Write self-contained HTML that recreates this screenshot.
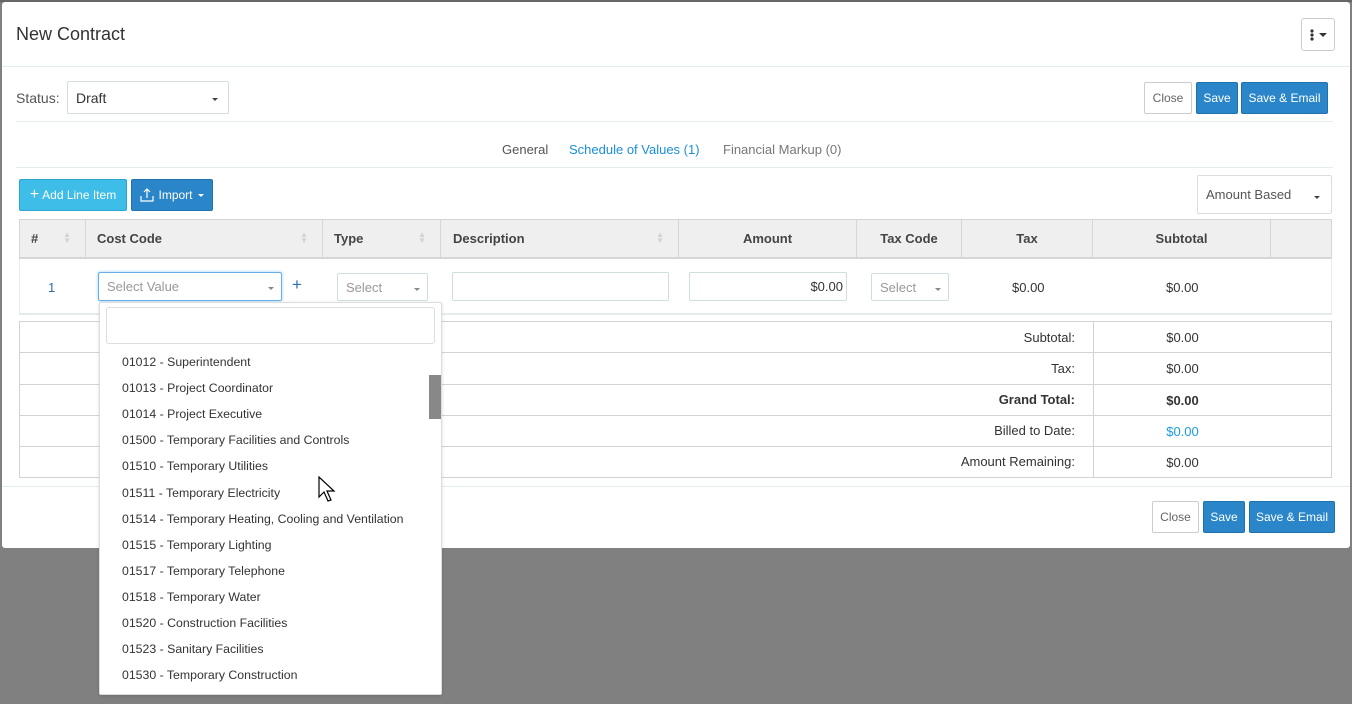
<!DOCTYPE html>
<html><head><meta charset="utf-8"><style>
*{box-sizing:border-box;margin:0;padding:0}
body{width:1352px;height:704px;background:#808080;font-family:"Liberation Sans",sans-serif;font-size:13px;color:#333;position:relative;overflow:hidden}
.a{position:absolute}
.modal{left:2px;top:2px;width:1348px;height:546px;background:#fff;border-radius:3px}
.hl{height:1px;background:#e3eeec}
.btn{position:absolute;display:flex;align-items:center;justify-content:center;font-size:12px;border-radius:2px}
.close{background:#fff;border:1px solid #ccc;color:#666}
.blue{background:#2a86c8;border:1px solid #1f72ad;color:#fff}
.sel{position:absolute;border:1px solid #cfdede;background:#fff;display:flex;align-items:center;padding-left:8px;border-radius:2px}
.caret{position:absolute;width:0;height:0;border-left:3px solid transparent;border-right:3px solid transparent;border-top:3px solid #444}
.th{position:absolute;top:219px;height:39px;display:flex;align-items:center;font-weight:bold;color:#444;border-right:1px solid #d6d6d6}
.sort{position:absolute;right:14px;top:13px;color:#d2d2d2;font-size:8px;line-height:6px}
.sr{position:absolute;left:19px;width:1313px;height:32px;border:1px solid #d3d3d3;border-top:none}
.lbl{position:absolute;right:256px;top:0;line-height:31px;text-align:right}
.val{position:absolute;left:1094px;width:177px;text-align:center;line-height:31px}
.it{position:absolute;left:122px;font-size:12.3px;color:#333}
</style></head><body>
<div class="a" style="left:0;top:0;width:1352px;height:2px;background:#666"></div>
<div class="a modal"></div>
<div class="a" style="left:16px;top:24px;font-size:18px;color:#333">New Contract</div>
<div class="btn close" style="left:1301px;top:18px;width:34px;height:33px;border-radius:3px"><svg width="4" height="12" viewBox="0 0 4 12"><circle cx="2" cy="2" r="1.6" fill="#333"/><circle cx="2" cy="6" r="1.6" fill="#333"/><circle cx="2" cy="10" r="1.6" fill="#333"/></svg><span style="margin-left:5px;display:inline-block;border-left:4px solid transparent;border-right:4px solid transparent;border-top:4px solid #333"></span></div>
<div class="a hl" style="left:2px;top:66px;width:1348px"></div>
<div class="a" style="left:16px;top:90px;font-size:14px;color:#555">Status:</div>
<div class="sel" style="left:67px;top:81px;width:162px;height:33px;font-size:14px;color:#333;border-color:#d5dede">Draft<span class="caret" style="left:144px;top:16px"></span></div>
<div class="btn close" style="left:1144px;top:82px;width:48px;height:32px">Close</div>
<div class="btn blue" style="left:1196px;top:82px;width:42px;height:32px">Save</div>
<div class="btn blue" style="left:1241px;top:82px;width:87px;height:32px">Save &amp; Email</div>
<div class="a hl" style="left:16px;top:121px;width:1317px"></div>
<div class="a" style="left:502px;top:142px;color:#555">General</div>
<div class="a" style="left:569px;top:142px;color:#1a8fdd">Schedule of Values (1)</div>
<div class="a" style="left:723px;top:142px;color:#777">Financial Markup (0)</div>
<div class="a hl" style="left:16px;top:167px;width:1317px"></div>
<div class="btn" style="left:19px;top:179px;width:108px;height:32px;background:#3dbde7;border:1px solid #2ba6d0;color:#fff;font-size:12px"><span style="font-size:16px;margin-right:3px">+</span>Add Line Item</div>
<div class="btn blue" style="left:131px;top:179px;width:82px;height:32px"><svg width="14" height="14" viewBox="0 0 14 14" style="margin-right:4px"><path d="M7 10V1M4 4l3-3 3 3M1 8v5h12V8" stroke="#fff" fill="none" stroke-width="1.2"/></svg>Import<span style="margin-left:5px;display:inline-block;border-left:3px solid transparent;border-right:3px solid transparent;border-top:3px solid #fff"></span></div>
<div class="sel" style="left:1197px;top:175px;width:135px;height:39px;color:#555;border-color:#ddd">Amount Based<span class="caret" style="left:116px;top:20px"></span></div>
<div class="a" style="left:19px;top:219px;width:1313px;height:40px;background:#efefef;border:1px solid #d6d6d6;border-bottom:2px solid #d6d6d6"></div>
<div class="th" style="left:19px;width:67px;padding-left:12px">#<span class="sort">▲<br>▼</span></div>
<div class="th" style="left:86px;width:237px;padding-left:11px">Cost Code<span class="sort">▲<br>▼</span></div>
<div class="th" style="left:323px;width:118px;padding-left:11px">Type<span class="sort">▲<br>▼</span></div>
<div class="th" style="left:441px;width:238px;padding-left:12px">Description<span class="sort">▲<br>▼</span></div>
<div class="th" style="left:679px;width:178px;justify-content:center">Amount</div>
<div class="th" style="left:857px;width:105px;justify-content:center">Tax Code</div>
<div class="th" style="left:962px;width:131px;justify-content:center">Tax</div>
<div class="th" style="left:1093px;width:178px;justify-content:center">Subtotal</div>
<div class="a" style="left:19px;top:259px;width:1313px;height:56px;border:1px solid #e3eeec;border-top:none;border-bottom:2px solid #e3eeec"></div>
<div class="a" style="left:48px;top:280px;color:#2a6fb0">1</div>
<div class="sel" style="left:98px;top:272px;width:184px;height:29px;border:1px solid #66afe9;box-shadow:0 0 3px #9cd0f5;color:#999">Select Value<span class="caret" style="left:169px;top:14px;border-top-color:#888"></span></div>
<div class="a" style="left:292px;top:275px;color:#2a6fb0;font-size:17px">+</div>
<div class="sel" style="left:337px;top:273px;width:91px;height:28px;color:#999">Select<span class="caret" style="left:76px;top:14px;border-top-color:#888"></span></div>
<div class="sel" style="left:452px;top:272px;width:217px;height:29px"></div>
<div class="sel" style="left:689px;top:272px;width:158px;height:29px;justify-content:flex-end;padding-right:3px">$0.00</div>
<div class="sel" style="left:871px;top:273px;width:78px;height:28px;color:#999">Select<span class="caret" style="left:63px;top:14px;border-top-color:#888"></span></div>
<div class="a" style="left:1012px;top:280px">$0.00</div>
<div class="a" style="left:1166px;top:280px">$0.00</div>
<div class="sr" style="top:321px;border-top:1px solid #d3d3d3"><span class="lbl">Subtotal:</span></div>
<div class="sr" style="top:353px"><span class="lbl">Tax:</span></div>
<div class="sr" style="top:384px"><span class="lbl" style="font-weight:bold">Grand Total:</span></div>
<div class="sr" style="top:415px"><span class="lbl">Billed to Date:</span></div>
<div class="sr" style="top:446px"><span class="lbl">Amount Remaining:</span></div>
<div class="a" style="left:1093px;top:321px;width:1px;height:157px;background:#d3d3d3"></div>
<div class="val" style="top:322px">$0.00</div>
<div class="val" style="top:353px">$0.00</div>
<div class="val" style="top:385px;font-weight:bold">$0.00</div>
<div class="val" style="top:416px;color:#1a9be6">$0.00</div>
<div class="val" style="top:447px">$0.00</div>
<div class="a hl" style="left:2px;top:486px;width:1348px"></div>
<div class="btn close" style="left:1152px;top:501px;width:47px;height:32px">Close</div>
<div class="btn blue" style="left:1203px;top:501px;width:42px;height:32px">Save</div>
<div class="btn blue" style="left:1249px;top:501px;width:86px;height:32px">Save &amp; Email</div>
<div class="a" style="left:99px;top:302px;width:343px;height:393px;background:#fff;border:1px solid #ddd;border-radius:2px;box-shadow:0 1px 3px rgba(0,0,0,.15)"></div>
<div class="a" style="left:106px;top:307px;width:329px;height:37px;border:1px solid #ddd;border-radius:3px"></div>
<div class="a" style="left:429px;top:375px;width:12px;height:44px;background:#888"></div>
<div class="it" style="top:355px">01012 - Superintendent</div>
<div class="it" style="top:381px">01013 - Project Coordinator</div>
<div class="it" style="top:407px">01014 - Project Executive</div>
<div class="it" style="top:433px">01500 - Temporary Facilities and Controls</div>
<div class="it" style="top:459px">01510 - Temporary Utilities</div>
<div class="it" style="top:486px">01511 - Temporary Electricity</div>
<div class="it" style="top:512px">01514 - Temporary Heating, Cooling and Ventilation</div>
<div class="it" style="top:538px">01515 - Temporary Lighting</div>
<div class="it" style="top:564px">01517 - Temporary Telephone</div>
<div class="it" style="top:590px">01518 - Temporary Water</div>
<div class="it" style="top:616px">01520 - Construction Facilities</div>
<div class="it" style="top:642px">01523 - Sanitary Facilities</div>
<div class="it" style="top:668px">01530 - Temporary Construction</div>
<svg class="a" style="left:318px;top:476px" width="22" height="28" viewBox="0 0 22 28"><path d="M1 1v20l5-5 4 9 3-1-4-9h7z" fill="#fff" stroke="#000" stroke-width="1.2"/></svg>
</body></html>
